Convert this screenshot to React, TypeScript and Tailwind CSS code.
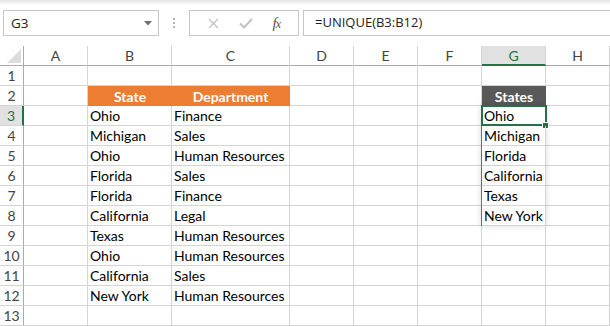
const cols = ['A', 'B', 'C', 'D', 'E', 'F', 'G', 'H'];

const rows: { b?: string; c?: string; g?: string }[] = [
  {},
  { b: 'State', c: 'Department', g: 'States' },
  { b: 'Ohio', c: 'Finance', g: 'Ohio' },
  { b: 'Michigan', c: 'Sales', g: 'Michigan' },
  { b: 'Ohio', c: 'Human Resources', g: 'Florida' },
  { b: 'Florida', c: 'Sales', g: 'California' },
  { b: 'Florida', c: 'Finance', g: 'Texas' },
  { b: 'California', c: 'Legal', g: 'New York' },
  { b: 'Texas', c: 'Human Resources' },
  { b: 'Ohio', c: 'Human Resources' },
  { b: 'California', c: 'Sales' },
  { b: 'New York', c: 'Human Resources' },
  {},
];

const cellFont = { fontFamily: 'Lato, "Open Sans", sans-serif' };
const uiFont = { fontFamily: '"Open Sans", "Noto Sans", sans-serif' };

const textCell =
  'border-r border-b border-[#d4d4d4] flex items-end pl-[2px] text-[14px] leading-[18px] text-black whitespace-nowrap';

function FormulaBar() {
  return (
    <div className="h-[46px] bg-white">
      <div className="h-[5px] bg-gradient-to-b from-[#e4e4e4] to-white" />
      <div className="flex items-stretch h-[26px] mt-[5px] pl-[3px]" style={uiFont}>
        {/* Name box */}
        <div className="w-[156px] border border-[#c6c6c6] flex items-center justify-between pl-[7px] pr-[6px] text-[13.5px] text-[#222]">
          <span>G3</span>
          <svg width="8" height="5" viewBox="0 0 8 5">
            <path d="M0 0 L8 0 L4 4.5 Z" fill="#6e6e6e" />
          </svg>
        </div>
        {/* dots */}
        <div className="w-[30px] flex flex-col items-center justify-center gap-[2px]">
          <span className="w-[2px] h-[2px] bg-[#b4b4b4]" />
          <span className="w-[2px] h-[2px] bg-[#b4b4b4]" />
          <span className="w-[2px] h-[2px] bg-[#b4b4b4]" />
        </div>
        {/* cancel / enter / fx */}
        <div className="w-[110px] border border-[#c6c6c6] flex items-center justify-around px-[8px]">
          <svg width="11" height="11" viewBox="0 0 11 11">
            <path d="M1 1 L10 10 M10 1 L1 10" stroke="#c2c2c2" strokeWidth="1.4" />
          </svg>
          <svg width="14" height="11" viewBox="0 0 14 11">
            <path d="M1 5.5 L5 9.5 L13 1" stroke="#c2c2c2" strokeWidth="2" fill="none" />
          </svg>
          <span
            className="text-[15px] italic text-[#555] tracking-[-1px]"
            style={{ fontFamily: '"Liberation Serif", serif' }}
          >
            f<span className="text-[12px]">x</span>
          </span>
        </div>
        <div className="w-[4px]" />
        <div className="flex-1 border border-r-0 border-[#c6c6c6] flex items-center pl-[11px] text-[13px] text-[#222]">
          =UNIQUE(B3:B12)
        </div>
      </div>
    </div>
  );
}

function HeaderRow() {
  return (
    <>
      <div className="h-[20px] border-r border-b border-[#ababab] flex items-end justify-end p-[2px]">
        <svg width="14" height="14" viewBox="0 0 14 14">
          <path d="M14 0 L14 14 L0 14 Z" fill="#dcdcdc" />
        </svg>
      </div>
      {cols.map((c) =>
        c === 'G' ? (
          <div
            key={c}
            className="h-[20px] bg-[#e1e1e1] border-r border-[#d4d4d4] border-b-2 border-b-[#217346] flex items-center justify-center text-[14px] text-[#217346]"
          >
            {c}
          </div>
        ) : (
          <div
            key={c}
            className="h-[20px] border-r border-[#d4d4d4] border-b border-b-[#ababab] flex items-center justify-center text-[14px] text-[#444]"
          >
            {c}
          </div>
        )
      )}
    </>
  );
}

export default function App() {
  return (
    <div className="w-[610px] h-[326px] overflow-hidden bg-white">
      <FormulaBar />
      <div
        className="grid grid-cols-[24px_64px_84px_118px_64px_64px_64px_64px_64px] auto-rows-[20px]"
        style={cellFont}
      >
        <HeaderRow />
        {rows.map((r, i) => {
          const n = i + 1;
          const isHeader = n === 2;
          const selected = n === 3;
          return (
            <div key={n} className="contents">
              {/* row number */}
              {selected ? (
                <div className="bg-[#e1e1e1] border-r-2 border-r-[#217346] border-b border-b-[#d4d4d4] flex items-center justify-center text-[14px] text-[#217346]">
                  {n}
                </div>
              ) : (
                <div className="border-r border-r-[#ababab] border-b border-b-[#d4d4d4] flex items-center justify-center text-[14px] text-[#444]">
                  {n}
                </div>
              )}
              {/* A */}
              <div className="border-r border-b border-[#d4d4d4]" />
              {/* B */}
              {isHeader ? (
                <div className="bg-[#ed7d31] flex items-end justify-center text-[14px] leading-[18px] font-bold text-white">
                  {r.b}
                </div>
              ) : (
                <div className={textCell}>{r.b}</div>
              )}
              {/* C */}
              {isHeader ? (
                <div className="bg-[#ed7d31] border-r border-[#ed7d31] flex items-end justify-center text-[14px] leading-[18px] font-bold text-white">
                  {r.c}
                </div>
              ) : (
                <div className={textCell}>{r.c}</div>
              )}
              {/* D E F */}
              <div className="border-r border-b border-[#d4d4d4]" />
              <div className="border-r border-b border-[#d4d4d4]" />
              <div className="border-r border-b border-[#d4d4d4]" />
              {/* G */}
              {isHeader ? (
                <div className="bg-[#595959] flex items-end justify-center text-[14px] leading-[18px] font-bold text-white">
                  {r.g}
                </div>
              ) : (
                <div className={'relative ' + textCell}>
                  {r.g}
                  {selected && (
                    <>
                      {/* spill range */}
                      <div className="absolute left-[-1px] top-[-1px] w-[65px] h-[121px] border border-[#4472c4] shadow-[0_0_6px_rgba(0,0,0,0.15)] pointer-events-none" />
                      {/* active cell */}
                      <div className="absolute left-[-1px] top-[-1px] w-[66px] h-[21px] border-2 border-[#217346] pointer-events-none" />
                      <div className="absolute right-[-4px] bottom-[-4px] w-[7px] h-[7px] bg-[#217346] border border-white" />
                    </>
                  )}
                </div>
              )}
              {/* H */}
              <div className="border-r border-b border-[#d4d4d4]" />
            </div>
          );
        })}
      </div>
    </div>
  );
}
